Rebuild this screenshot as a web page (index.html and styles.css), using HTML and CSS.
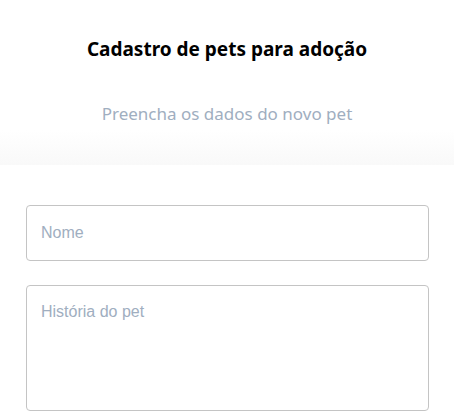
FILE: index.html
```html
<!DOCTYPE html>
<html lang="pt-BR">
<head>
<meta charset="utf-8">
<title>Cadastro de pets</title>
<link rel="stylesheet" href="styles.css">
</head>
<body>
<header class="header">
  <h1 class="title">Cadastro de pets para adoção</h1>
  <p class="subtitle">Preencha os dados do novo pet</p>
</header>
<form class="form">
  <input class="field" type="text" placeholder="Nome">
  <textarea class="field area" placeholder="História do pet"></textarea>
</form>
</body>
</html>
```
FILE: styles.css
```css
* { box-sizing: border-box; }
html, body { margin: 0; padding: 0; background: #fff; }
body { font-family: "Noto Sans", "Open Sans", sans-serif; overflow: hidden; }
.header {
  height: 165px;
  display: flex;
  flex-direction: column;
  align-items: center;
  padding-top: 37px;
  background: linear-gradient(to bottom, #ffffff 0, #ffffff 130px, #f9f9f9 165px);
}
.title {
  margin: 0;
  font-size: 19px;
  font-weight: 700;
  line-height: 24px;
  color: #000;
}
.subtitle {
  margin: 41px 0 0;
  font-size: 17px;
  line-height: 24px;
  color: #a0aec0;
}
.form {
  display: flex;
  flex-direction: column;
  gap: 24px;
  padding: 40px 25px 0 26px;
}
.field {
  display: block;
  width: 100%;
  height: 56px;
  border: 1px solid #c4c4c4;
  border-radius: 4px;
  padding: 0 14px;
  font-family: "Liberation Sans", Arial, sans-serif;
  font-size: 16px;
  color: #333;
  background: #fff;
  outline: none;
}
.area {
  height: 126px;
  padding: 17px 14px;
  resize: none;
}
.field::placeholder { color: #a0aec0; opacity: 1; }
```
